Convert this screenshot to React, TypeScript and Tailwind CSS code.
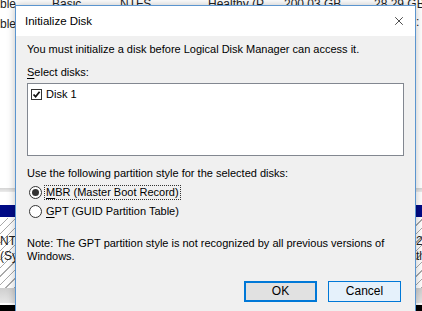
import { X } from 'lucide-react'

// Background window rows peeking out behind the dialog
function BackdropWindow() {
  return (
    <div className="absolute inset-0 bg-white text-[12px] leading-[14px] text-[#222]">
      {/* volume list rows */}
      <div className="absolute left-0 top-[-3px] flex w-[440px] whitespace-nowrap">
        <span className="w-[52px]">ble</span>
        <span className="w-[68px]">Basic</span>
        <span className="w-[88px]">NTFS</span>
        <span className="w-[76px]">Healthy (P...</span>
        <span className="w-[90px]">200.03 GB</span>
        <span>28.29 GB</span>
      </div>
      <div className="absolute left-0 top-[17px]">ble</div>
      <div className="absolute left-[416px] top-[15px]">:</div>

      {/* disk map area */}
      <div className="absolute left-0 top-[188px] h-[4px] w-full bg-gradient-to-b from-[#d4d4d4] to-[#ececec]" />
      <div className="absolute left-0 top-[205px] h-[12px] w-full bg-[#000b86]" />
      <div className="absolute left-0 top-[218px] h-[70px] w-full bg-[repeating-linear-gradient(135deg,#ffffff_0,#ffffff_5px,#a9a9a9_5px,#a9a9a9_6px)]" />
      <div className="absolute left-0 top-[234px] leading-[15px]">
        <div>NTF</div>
        <div>(Sys</div>
      </div>
      <div className="absolute left-[416px] top-[234px] leading-[15px]">
        <div>2</div>
        <div>tl</div>
      </div>
      <div className="absolute left-0 top-[288px] h-[15px] w-full bg-gradient-to-b from-[#cfcfcf] to-[#e6e6e6]" />
      <div className="absolute left-0 top-[305px] h-[6px] w-full bg-black" />
    </div>
  )
}

function Underlined({ letter, rest }: { letter: string; rest: string }) {
  return (
    <>
      <span className="underline underline-offset-2">{letter}</span>
      {rest}
    </>
  )
}

function Radio({ checked }: { checked: boolean }) {
  return (
    <span className="flex h-[13px] w-[13px] items-center justify-center rounded-full border border-[#333] bg-white">
      {checked && <span className="h-[7px] w-[7px] rounded-full bg-[#333]" />}
    </span>
  )
}

export default function App() {
  return (
    <div
      className="relative h-[311px] w-[422px] overflow-hidden"
      style={{ fontFamily: '"Liberation Sans", Arial, sans-serif' }}
    >
      <BackdropWindow />

      {/* Dialog */}
      <div className="absolute left-[15px] top-[5px] flex h-[330px] w-[401px] flex-col border border-[#5b95cf] bg-[#f0f0f0] text-[11px] leading-[13px] text-black shadow-[0_0_8px_rgba(0,0,0,0.25)]">
        {/* Title bar */}
        <div className="flex h-[30px] items-center justify-between bg-white pl-[9px] pr-[9px]">
          <span className="text-[11.5px]">Initialize Disk</span>
          <X className="h-[14px] w-[14px] text-black" strokeWidth={1.2} />
        </div>

        {/* Body */}
        <div className="flex flex-col px-[11px]">
          <p className="mt-[7px]">You must initialize a disk before Logical Disk Manager can access it.</p>

          <p className="mt-[10px]">
            <Underlined letter="S" rest="elect disks:" />
          </p>

          <div className="mt-[4px] h-[73px] border border-[#828790] bg-white px-[3px] pt-[4px]">
            <div className="flex items-center gap-[4px]">
              <span className="flex h-[11px] w-[11px] items-center justify-center border border-[#333] bg-white">
                <svg viewBox="0 0 9 9" className="h-[9px] w-[9px]">
                  <path d="M1.5 4.5 L3.6 6.7 L7.6 1.8" fill="none" stroke="#111" strokeWidth="1.8" />
                </svg>
              </span>
              <span>Disk 1</span>
            </div>
          </div>

          <p className="mt-[11px]">Use the following partition style for the selected disks:</p>

          <div className="mt-[5px] flex flex-col gap-[5px] pl-[2px]">
            <label className="flex items-center gap-[2px]">
              <Radio checked />
              <span className="border border-dotted border-[#333] px-[1px]">
                <Underlined letter="M" rest="BR (Master Boot Record)" />
              </span>
            </label>
            <label className="flex items-center gap-[2px]">
              <Radio checked={false} />
              <span className="px-[2px]">
                <Underlined letter="G" rest="PT (GUID Partition Table)" />
              </span>
            </label>
          </div>

          <p className="mt-[19px] leading-[13px]">
            Note: The GPT partition style is not recognized by all previous versions of Windows.
          </p>

          <div className="mt-[18px] flex justify-end gap-[11px] pr-[3px]">
            <button className="h-[21px] w-[73px] border-2 border-[#0078d7] bg-[#e1e1e1] text-[12px]">OK</button>
            <button className="h-[21px] w-[73px] border border-[#0078d7] bg-[#e5f1fb] text-[12px]">Cancel</button>
          </div>
        </div>
      </div>
    </div>
  )
}
